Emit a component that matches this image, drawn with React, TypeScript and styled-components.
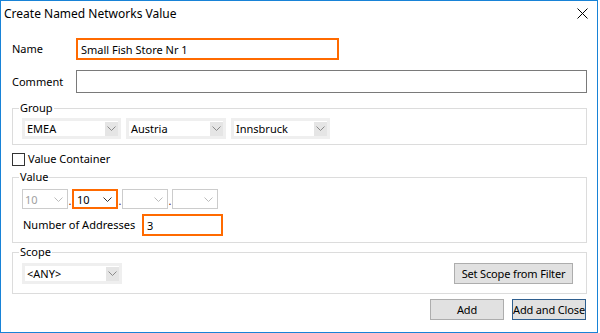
import React from "react";
import styled, {createGlobalStyle} from "styled-components";

const GlobalStyle = createGlobalStyle`
  body {
    margin: 0;
    background: #ffffff;
    font-family: "Noto Sans", "Liberation Sans", sans-serif;
    font-size: 11px;
    color: #000000;
  }
`

const Window = styled.div`
  width: 598px;
  height: 333px;
  box-sizing: border-box;
  border: 1px solid #1883d7;
  background: #ffffff;
  display: flex;
  flex-direction: column;
`

const TitleBar = styled.div`
  height: 29px;
  box-sizing: border-box;
  padding: 0 9px 4px 3px;
  display: flex;
  align-items: center;
  justify-content: space-between;
  font-size: 12px;
`

const Body = styled.div`
  padding: 8px 10px 0 11px;
  display: flex;
  flex-direction: column;
`

const FieldRow = styled.div<{ $gap?: number }>`
  display: flex;
  align-items: center;
  margin-top: ${p => p.$gap ?? 0}px;
`

const Label = styled.div<{ $w: number; $indent?: number }>`
  width: ${p => p.$w}px;
  padding-left: ${p => p.$indent ?? 0}px;
  box-sizing: border-box;
  line-height: 14px;
`

const TextBox = styled.div<{ $w: number; $h: number; $focus?: boolean }>`
  width: ${p => p.$w}px;
  height: ${p => p.$h}px;
  box-sizing: border-box;
  border: ${p => (p.$focus ? "2px solid #ff6a00" : "1px solid #7a7a7a")};
  padding-left: ${p => (p.$focus ? 3 : 4)}px;
  display: flex;
  align-items: center;
`

const Box = styled.fieldset<{ $pt: number; $pb: number; $gap?: number }>`
  margin: ${p => p.$gap ?? 0}px 0 0 0;
  padding: ${p => p.$pt}px 13px ${p => p.$pb}px 9px;
  border: 1px solid #dcdcdc;
  min-width: 0;
  display: flex;
  flex-direction: column;
`

const Legend = styled.legend`
  padding: 0 1px;
  margin-left: -3px;
  line-height: 14px;
`

const ComboRow = styled.div<{ $gap: number }>`
  display: flex;
  align-items: center;
  gap: ${p => p.$gap}px;
`

type ComboKind = "plain" | "focus" | "disabled";

const ComboFrame = styled.div<{ $w: number; $h: number; $kind: ComboKind }>`
  width: ${p => p.$w}px;
  height: ${p => p.$h}px;
  box-sizing: border-box;
  display: flex;
  align-items: center;
  background: #ffffff;
  border: ${p =>
    p.$kind === "focus" ? "2px solid #ff6a00" : p.$kind === "disabled" ? "1px solid #cccccc" : "3px solid #efefef"};
  color: ${p => (p.$kind === "disabled" ? "#a0a0a0" : "#000000")};
  padding-left: ${p => (p.$kind === "focus" ? 3 : 2)}px;
`

const ComboText = styled.span`
  flex: 1;
  white-space: nowrap;
`

const ArrowBox = styled.div<{ $kind: ComboKind }>`
  width: ${p => (p.$kind === "plain" ? 13 : 16)}px;
  height: ${p => (p.$kind === "plain" ? 14 : 16)}px;
  background: ${p => (p.$kind === "plain" ? "#e5e5e5" : "transparent")};
  display: flex;
  align-items: center;
  justify-content: center;
  margin-right: ${p => (p.$kind === "plain" ? 0 : 1)}px;
`

const Dot = styled.div`
  width: 4px;
  height: 20px;
  display: flex;
  align-items: flex-end;
  justify-content: center;
  font-size: 11px;
  line-height: 16px;
  color: #5a1a1a;
`

const CheckRow = styled.label`
  display: flex;
  align-items: center;
  gap: 3px;
  margin-top: 7px;
  line-height: 14px;
`

const CheckBox = styled.span`
  width: 13px;
  height: 13px;
  box-sizing: border-box;
  border: 1px solid #333333;
  background: #ffffff;
`

const SpreadRow = styled.div`
  display: flex;
  align-items: center;
  justify-content: space-between;
`

const Button = styled.button<{ $w: number; $default?: boolean }>`
  width: ${p => p.$w}px;
  height: 21px;
  box-sizing: border-box;
  padding: 0;
  background: #e1e1e1;
  border: 1px solid ${p => (p.$default ? "#2f5f8f" : "#adadad")};
  font-family: inherit;
  font-size: 11px;
  letter-spacing: -0.15px;
  white-space: nowrap;
  color: #000000;
`

const Footer = styled.div`
  display: flex;
  justify-content: flex-end;
  gap: 8px;
  margin-top: 5px;
  padding-right: 1px;
`

function Chevron({color}: { color: string }) {
  return (
    <svg width="9" height="5" viewBox="0 0 9 5">
      <polyline points="0.5,0.5 4.5,4.5 8.5,0.5" fill="none" stroke={color} strokeWidth="1"/>
    </svg>
  );
}

function CloseIcon() {
  return (
    <svg width="11" height="11" viewBox="0 0 11 11">
      <path d="M0.5 0.5 L10.5 10.5 M10.5 0.5 L0.5 10.5" stroke="#000" strokeWidth="1" fill="none"/>
    </svg>
  );
}

function Combo({w, h, kind, text}: { w: number; h: number; kind: ComboKind; text?: string }) {
  const arrow = kind === "plain" ? "#8a8a8a" : kind === "focus" ? "#333333" : "#bcbcbc";
  return (
    <ComboFrame $w={w} $h={h} $kind={kind}>
      <ComboText>{text}</ComboText>
      <ArrowBox $kind={kind}><Chevron color={arrow}/></ArrowBox>
    </ComboFrame>
  );
}

export default function App() {
  return (
    <>
      <GlobalStyle/>
      <Window>
        <TitleBar>
          <span>Create Named Networks Value</span>
          <CloseIcon/>
        </TitleBar>
        <Body>
          <FieldRow>
            <Label $w={64}>Name</Label>
            <TextBox $w={263} $h={22} $focus>Small Fish Store Nr 1</TextBox>
          </FieldRow>
          <FieldRow $gap={10}>
            <Label $w={64}>Comment</Label>
            <TextBox $w={513} $h={23}/>
          </FieldRow>

          <Box $pt={3} $pb={5} $gap={8}>
            <Legend>Group</Legend>
            <ComboRow $gap={5}>
              <Combo w={99} h={21} kind="plain" text="EMEA"/>
              <Combo w={100} h={21} kind="plain" text="Austria"/>
              <Combo w={99} h={21} kind="plain" text="Innsbruck"/>
            </ComboRow>
          </Box>

          <CheckRow>
            <CheckBox/>
            <span>Value Container</span>
          </CheckRow>

          <Box $pt={5} $pb={6} $gap={4}>
            <Legend>Value</Legend>
            <ComboRow $gap={0}>
              <Combo w={46} h={20} kind="disabled" text="10"/>
              <Dot>.</Dot>
              <Combo w={46} h={20} kind="focus" text="10"/>
              <Dot>.</Dot>
              <Combo w={46} h={20} kind="disabled"/>
              <Dot>.</Dot>
              <Combo w={46} h={20} kind="disabled"/>
            </ComboRow>
            <FieldRow $gap={5}>
              <Label $w={120} $indent={1}>Number of Addresses</Label>
              <TextBox $w={81} $h={22} $focus>3</TextBox>
            </FieldRow>
          </Box>

          <Box $pt={4} $pb={9} $gap={2}>
            <Legend>Scope</Legend>
            <SpreadRow>
              <Combo w={100} h={21} kind="plain" text="<ANY>"/>
              <Button $w={119}>Set Scope from Filter</Button>
            </SpreadRow>
          </Box>

          <Footer>
            <Button $w={74}>Add</Button>
            <Button $w={74} $default>Add and Close</Button>
          </Footer>
        </Body>
      </Window>
    </>
  );
}
